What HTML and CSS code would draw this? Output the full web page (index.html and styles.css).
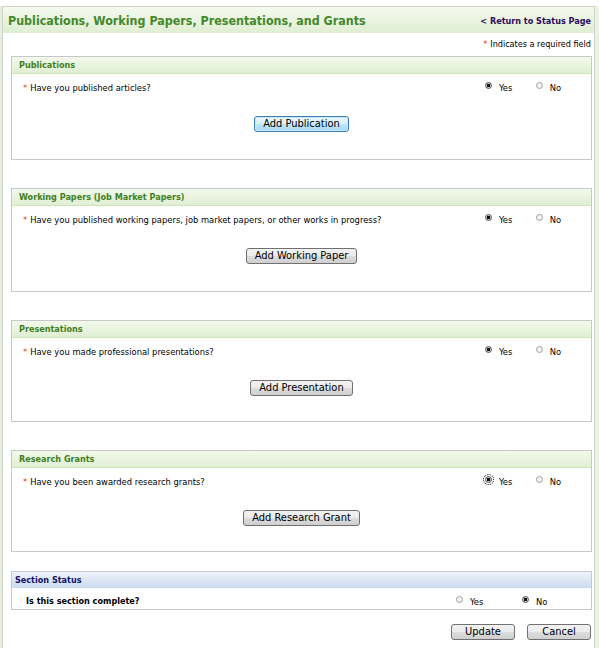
FILE: index.html
```html
<!DOCTYPE html>
<html>
<head>
<meta charset="utf-8">
<link rel="stylesheet" href="styles.css">
</head>
<body>
<div class="page">
  <div class="frame">
    <div class="topbar">
      <h1 class="title">Publications, Working Papers, Presentations, and Grants</h1>
      <a class="return" href="#">&lt; Return to Status Page</a>
    </div>
    <div class="content">
      <div class="req"><span class="star">*</span>Indicates a required field</div>

      <div class="section">
        <div class="sec-head">Publications</div>
        <div class="row">
          <div class="q"><span class="star">*</span>Have you published articles?</div>
          <div class="opts">
            <label class="opt yes"><span class="radio on"></span>Yes</label>
            <label class="opt"><span class="radio"></span>No</label>
          </div>
        </div>
        <div class="btn-area"><button class="btn focus">Add Publication</button></div>
      </div>

      <div class="section">
        <div class="sec-head">Working Papers (Job Market Papers)</div>
        <div class="row">
          <div class="q"><span class="star">*</span>Have you published working papers, job market papers, or other works in progress?</div>
          <div class="opts">
            <label class="opt yes"><span class="radio on"></span>Yes</label>
            <label class="opt"><span class="radio"></span>No</label>
          </div>
        </div>
        <div class="btn-area"><button class="btn">Add Working Paper</button></div>
      </div>

      <div class="section short">
        <div class="sec-head">Presentations</div>
        <div class="row">
          <div class="q"><span class="star">*</span>Have you made professional presentations?</div>
          <div class="opts">
            <label class="opt yes"><span class="radio on"></span>Yes</label>
            <label class="opt"><span class="radio"></span>No</label>
          </div>
        </div>
        <div class="btn-area"><button class="btn">Add Presentation</button></div>
      </div>

      <div class="section short tight">
        <div class="sec-head">Research Grants</div>
        <div class="row">
          <div class="q"><span class="star">*</span>Have you been awarded research grants?</div>
          <div class="opts">
            <label class="opt yes"><span class="radio on dotted"></span>Yes</label>
            <label class="opt"><span class="radio"></span>No</label>
          </div>
        </div>
        <div class="btn-area"><button class="btn">Add Research Grant</button></div>
      </div>

      <div class="section status">
        <div class="sec-head">Section Status</div>
        <div class="row status-row">
          <div class="q strong">Is this section complete?</div>
          <div class="opts">
            <label class="opt yes"><span class="radio"></span>Yes</label>
            <label class="opt"><span class="radio on"></span>No</label>
          </div>
        </div>
      </div>

      <div class="actions">
        <button class="btn wide">Update</button>
        <button class="btn wide">Cancel</button>
      </div>
    </div>
  </div>
</div>
</body>
</html>
```
FILE: styles.css
```css
html, body {
  margin: 0;
  padding: 0;
  background: #ffffff;
}
body {
  font-family: "DejaVu Sans Condensed", "DejaVu Sans", sans-serif;
  font-size: 9.3px;
  color: #000;
}
.page {
  margin-top: 6px;
  border-left: 2px solid #e6eedd;
  border-right: 4px solid #eaf2e2;
  height: 642px;
  box-sizing: border-box;
}
.frame {
  border: 1px solid #cfd4cb;
  border-bottom: none;
  height: 100%;
  box-sizing: border-box;
}
.topbar {
  display: flex;
  justify-content: space-between;
  align-items: center;
  height: 26px;
  padding: 1px 3px 0 5px;
  box-sizing: border-box;
  background: linear-gradient(#f5faef, #dfeed2);
}
.title {
  margin: 0;
  font-size: 12.4px;
  font-weight: bold;
  color: #44882a;
}
.return {
  font-size: 9px;
  font-weight: bold;
  color: #2e0a5e;
  text-decoration: none;
}
.content {
  padding: 0 2px 0 8px;
}
.req {
  text-align: right;
  font-size: 9px;
  height: 13px;
  line-height: 13px;
  margin-top: 5px;
  margin-bottom: 5px;
  padding-right: 1px;
}
.star {
  color: #e23232;
  margin-right: 3px;
}
.section {
  border: 1px solid #c8c8c8;
  height: 104px;
  box-sizing: border-box;
  margin-bottom: 28px;
}
.section.short {
  height: 102px;
}
.section.tight {
  margin-bottom: 19px;
}
.sec-head {
  height: 16px;
  line-height: 17px;
  padding-left: 7px;
  font-size: 9px;
  font-weight: bold;
  color: #3f7f22;
  background: linear-gradient(#f3f9ec, #e0efd3);
  border-bottom: 1px solid #cfe4ba;
}
.row {
  display: flex;
  justify-content: space-between;
  padding-top: 7px;
  height: 13px;
  line-height: 13px;
}
.q {
  padding-left: 11px;
}
.opts {
  display: flex;
  width: 76px;
  padding-right: 30px;
}
.opt {
  display: flex;
  align-items: center;
  color: #000;
}
.opt.yes {
  width: 52px;
}
.radio {
  display: inline-block;
  width: 7px;
  height: 7px;
  border-radius: 50%;
  border: 1px solid #9aa0a6;
  background: #f4f4f4;
  margin-right: 7px;
  position: relative;
  top: -2px;
  box-sizing: border-box;
}
.radio.on {
  border-color: #555;
  background: radial-gradient(circle, #111 45%, #c9c9c9 55%);
}
.radio.dotted {
  outline: 1px dotted #000;
  outline-offset: 1px;
}
.btn-area {
  display: flex;
  justify-content: center;
  padding-top: 22px;
}
.btn {
  font-family: "DejaVu Sans Condensed", "DejaVu Sans", sans-serif;
  font-size: 11px;
  height: 16px;
  line-height: 12px;
  padding: 0 8px;
  border: 1px solid #707070;
  border-radius: 3px;
  background: linear-gradient(#f2f2f2 0%, #ebebeb 50%, #dddddd 51%, #cfcfcf 100%);
  color: #000;
  margin: 0;
}
.btn.focus {
  border-color: #3c7fb1;
  background: linear-gradient(#eaf6fd 0%, #d9f0fc 50%, #bee6fd 51%, #a7d9f5 100%);
  box-shadow: inset 0 0 0 1px #c8e9fb;
}
.status {
  height: 39px;
  margin-bottom: 0;
}
.status .sec-head {
  color: #12126a;
  padding-left: 3px;
  background: linear-gradient(#eef3fa, #cbdaee);
  border-bottom: 1px solid #ffffff;
}
.status-row {
  padding-top: 6px;
}
.status-row .opts {
  width: 92px;
  padding-right: 43px;
}
.status-row .opt.yes {
  width: 66px;
}
.strong {
  font-weight: bold;
  font-size: 9px;
  padding-left: 14px;
}
.actions {
  display: flex;
  justify-content: flex-end;
  gap: 12px;
  margin-top: 14px;
  padding-right: 1px;
}
.btn.wide {
  width: 64px;
}
```
